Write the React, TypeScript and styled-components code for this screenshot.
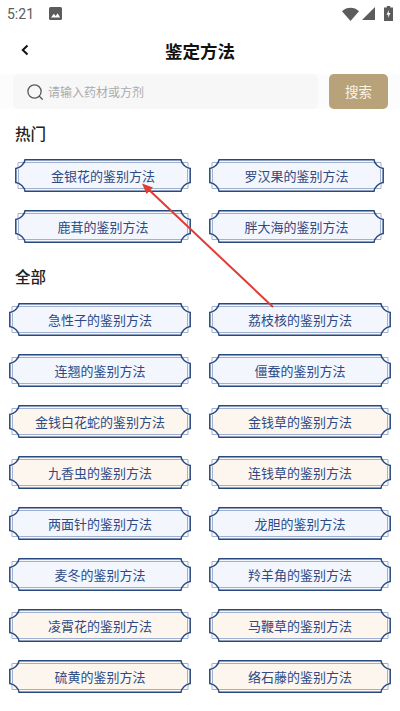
import React from "react"
import styled, { createGlobalStyle } from "styled-components"

const GlobalStyle = createGlobalStyle`
  html, body {
    margin: 0;
    padding: 0;
    background: #ffffff;
    font-family: "Noto Sans CJK SC", "Noto Sans", sans-serif;
  }
`

const Page = styled.div`
  position: relative;
  width: 400px;
  height: 711px;
  overflow: hidden;
  background: #ffffff;
`

const StatusBar = styled.div`
  display: flex;
  align-items: center;
  height: 27px;
  padding: 0 7px;
  color: #5c5c5c;
`

const Clock = styled.span`
  font-family: Roboto, sans-serif;
  font-size: 14px;
  margin-right: 15px;
`

const StatusRight = styled.div`
  display: flex;
  align-items: center;
  gap: 3px;
  margin-left: auto;
`

const BatteryIcon = styled.svg`
  margin-left: 6px;
`

const NavBar = styled.div`
  display: flex;
  align-items: center;
  justify-content: center;
  position: relative;
  height: 47px;
`

const BackButton = styled.div`
  position: absolute;
  left: 18px;
  top: 16px;
  display: flex;
  width: 12px;
  height: 14px;
`

const Title = styled.h1`
  margin: 0;
  font-size: 17.5px;
  font-weight: 700;
  color: #111111;
`

const SearchRow = styled.div`
  display: flex;
  align-items: stretch;
  gap: 11px;
  height: 35px;
  padding: 0 12px 0 13px;
  background: #fcfcfc;
`

const SearchInput = styled.div`
  display: flex;
  flex: 1;
  align-items: center;
  gap: 4px;
  padding-left: 13px;
  border-radius: 6px;
  background: #f7f7f7;
  color: #ababab;
  font-size: 12px;
`

const SearchButton = styled.div`
  display: flex;
  align-items: center;
  justify-content: center;
  width: 59px;
  padding-bottom: 1px;
  border-radius: 5px;
  background: #b8a27a;
  color: #f8f4ea;
  font-size: 13.5px;
`

const SectionTitle = styled.h2<{ $top: number }>`
  margin: ${({ $top }) => $top}px 0 0 15px;
  height: 24px;
  line-height: 24px;
  font-size: 15.5px;
  font-weight: 500;
  color: #222222;
`

const ChipGrid = styled.div<{ $left: number; $cols: string; $top: number }>`
  display: grid;
  grid-template-columns: ${({ $cols }) => $cols};
  column-gap: 18px;
  row-gap: 18px;
  margin-top: ${({ $top }) => $top}px;
  padding-left: ${({ $left }) => $left}px;
`

const ChipBox = styled.div`
  position: relative;
  display: flex;
  align-items: center;
  justify-content: center;
  height: 33px;
  color: #2d4a85;
  font-size: 13px;
`

const ChipFrame = styled.svg`
  position: absolute;
  inset: 0;
`

const ChipLabel = styled.span`
  position: relative;
`

const Arrow = styled.svg`
  position: absolute;
  left: 0;
  top: 0;
  pointer-events: none;
`

function Chip({ label, width, warm }: { label: string; width: number; warm?: boolean }) {
  const w = width
  const shape = `M10 .8H${w - 10}C${w - 9.5} 5 ${w - 5} 9 ${w - 0.8} 9.500V23.500C${w - 5} 24 ${w - 9.5} 28 ${w - 10} 32.200H10C9.500 28 5 24 .8 23.500V9.500C5 9 9.500 5 10 .8Z`
  return (
    <ChipBox>
      <ChipFrame width={w} height={33} viewBox={`0 0 ${w} 33`}>
        <path d={shape} fill={warm ? "#fdf6ef" : "#f3f6fd"} />
        <g fill="none" stroke="#9fb0d2" strokeWidth="1">
          <path d={`M3 9V3.500H10M${w - 10} 3.500H${w - 3}V9M${w - 3} 24V29.500H${w - 10}M10 29.500H3V24`} />
          <path d={`M10 3.500H${w - 10}M10 29.500H${w - 10}M3.500 10V23M${w - 3.5} 10V23`} />
        </g>
        <path d={shape} fill="none" stroke="#28497f" strokeWidth="1.500" />
      </ChipFrame>
      <ChipLabel>{label}</ChipLabel>
    </ChipBox>
  )
}

const hot = ["金银花", "罗汉果", "鹿茸", "胖大海"]

const all: [string, boolean][] = [
  ["急性子", false],
  ["荔枝核", false],
  ["连翘", false],
  ["僵蚕", false],
  ["金钱白花蛇", true],
  ["金钱草", true],
  ["九香虫", true],
  ["连钱草", true],
  ["两面针", false],
  ["龙胆", false],
  ["麦冬", false],
  ["羚羊角", false],
  ["凌霄花", true],
  ["马鞭草", true],
  ["硫黄", true],
  ["络石藤", true],
]

export default function App() {
  return (
    <Page>
      <GlobalStyle />
      <StatusBar>
        <Clock>5:21</Clock>
        <svg width="13" height="13" viewBox="0 0 13 13">
          <path d="M1.500 0h10A1.500 1.500 0 0 1 13 1.500v10a1.500 1.500 0 0 1-1.500 1.500h-10A1.500 1.500 0 0 1 0 11.500v-10A1.500 1.500 0 0 1 1.500 0Z" fill="#5c5c5c" />
          <path d="M2 10.500 4.800 6.800l1.900 2.300 2-2.800 2.400 4.200Z" fill="#fff" />
        </svg>
        <StatusRight>
          <svg width="17" height="14" viewBox="0 0 17 14">
            <path d="M0 4.200C4.800-.3 12.200-.3 17 4.200L8.500 14Z" fill="#5c5c5c" />
          </svg>
          <svg width="13" height="13" viewBox="0 0 13 13">
            <path d="M13 0V13H0Z" fill="#5c5c5c" />
          </svg>
          <BatteryIcon width="9" height="15" viewBox="0 0 9 15">
            <path d="M2.800 0h3.400v1.500H9V15H0V1.500h2.800Z" fill="#5c5c5c" />
            <path d="M5 4 2.500 8.800h1.800L3.900 12l2.600-4.900H4.700Z" fill="#fff" />
          </BatteryIcon>
        </StatusRight>
      </StatusBar>
      <NavBar>
        <BackButton>
          <svg width="12" height="14" viewBox="0 0 12 14">
            <path d="M9.500 2.500 4.800 7l4.700 4.500" fill="none" stroke="#111" strokeWidth="2" />
          </svg>
        </BackButton>
        <Title>鉴定方法</Title>
      </NavBar>
      <SearchRow>
        <SearchInput>
          <svg width="18" height="18" viewBox="0 0 18 18">
            <circle cx="8.500" cy="8.500" r="6.600" fill="none" stroke="#5a5a5a" strokeWidth="1.300" />
            <path d="m13.300 13.300 3 3" stroke="#5a5a5a" strokeWidth="1.300" strokeLinecap="round" />
          </svg>
          请输入药材或方剂
        </SearchInput>
        <SearchButton>搜索</SearchButton>
      </SearchRow>
      <SectionTitle $top={12}>热门</SectionTitle>
      <ChipGrid $left={15} $cols="176px 175px" $top={14}>
        {hot.map((name, i) => (
          <Chip key={name} label={`${name}的鉴别方法`} width={i % 2 ? 175 : 176} />
        ))}
      </ChipGrid>
      <SectionTitle $top={21}>全部</SectionTitle>
      <ChipGrid $left={9} $cols="182px 182px" $top={15}>
        {all.map(([name, warm]) => (
          <Chip key={name} label={`${name}的鉴别方法`} width={182} warm={warm} />
        ))}
      </ChipGrid>
      <Arrow width={400} height={711} viewBox="0 0 400 711">
        <path d="M273 307 147 188" stroke="#e03c34" strokeWidth="2" fill="none" />
        <path d="M142 183.500 153 187.500 146.500 194Z" fill="#e03c34" />
      </Arrow>
    </Page>
  )
}
